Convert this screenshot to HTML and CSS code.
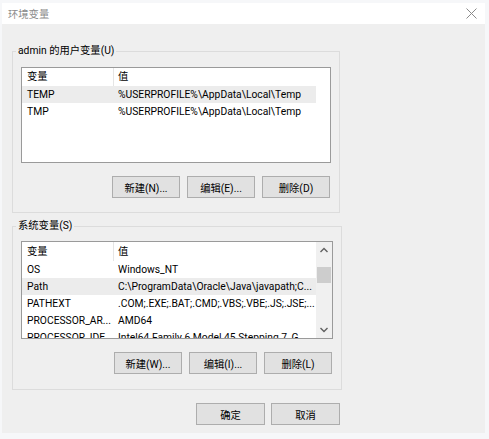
FILE: index.html
```html
<!DOCTYPE html>
<html lang="zh-CN">
<head>
    <meta charset="UTF-8">
    <title>环境变量</title>
    <link rel="stylesheet" href="styles.css">
</head>
<body>
    <div class="dialog">
        <div class="titlebar">
            <span class="title">环境变量</span>
            <svg class="close" width="11" height="11" viewBox="0 0 11 11">
                <path d="M0.5 0.5 L10.5 10.5 M10.5 0.5 L0.5 10.5" stroke="#8a8a8a" stroke-width="1" fill="none"/>
            </svg>
        </div>

        <div class="content">
            <!-- User variables -->
            <fieldset class="group">
                <legend>admin 的用户变量(U)</legend>
                <div class="list">
                    <div class="rows">
                        <div class="row header">
                            <span class="col-name">变量</span>
                            <span class="col-value">值</span>
                        </div>
                        <div class="row selected">
                            <span class="col-name">TEMP</span>
                            <span class="col-value">%USERPROFILE%\AppData\Local\Temp</span>
                        </div>
                        <div class="row">
                            <span class="col-name">TMP</span>
                            <span class="col-value">%USERPROFILE%\AppData\Local\Temp</span>
                        </div>
                    </div>
                </div>
                <div class="buttons">
                    <button>新建(N)...</button>
                    <button>编辑(E)...</button>
                    <button>删除(D)</button>
                </div>
            </fieldset>

            <!-- System variables -->
            <fieldset class="group system">
                <legend>系统变量(S)</legend>
                <div class="list">
                    <div class="rows">
                        <div class="row header">
                            <span class="col-name">变量</span>
                            <span class="col-value">值</span>
                        </div>
                        <div class="row">
                            <span class="col-name">OS</span>
                            <span class="col-value">Windows_NT</span>
                        </div>
                        <div class="row selected">
                            <span class="col-name">Path</span>
                            <span class="col-value">C:\ProgramData\Oracle\Java\javapath;C...</span>
                        </div>
                        <div class="row">
                            <span class="col-name">PATHEXT</span>
                            <span class="col-value">.COM;.EXE;.BAT;.CMD;.VBS;.VBE;.JS;.JSE;...</span>
                        </div>
                        <div class="row">
                            <span class="col-name">PROCESSOR_AR...</span>
                            <span class="col-value">AMD64</span>
                        </div>
                        <div class="row">
                            <span class="col-name">PROCESSOR_IDE...</span>
                            <span class="col-value">Intel64 Family 6 Model 45 Stepping 7, G...</span>
                        </div>
                    </div>
                    <div class="scrollbar">
                        <svg class="arrow" width="16" height="16" viewBox="0 0 16 16">
                            <path d="M4.5 10 L8 6.5 L11.5 10" stroke="#606060" stroke-width="1.4" fill="none"/>
                        </svg>
                        <div class="track">
                            <div class="thumb"></div>
                        </div>
                        <svg class="arrow" width="16" height="16" viewBox="0 0 16 16">
                            <path d="M4.5 6 L8 9.5 L11.5 6" stroke="#606060" stroke-width="1.4" fill="none"/>
                        </svg>
                    </div>
                </div>
                <div class="buttons">
                    <button>新建(W)...</button>
                    <button>编辑(I)...</button>
                    <button>删除(L)</button>
                </div>
            </fieldset>

            <div class="buttons footer">
                <button class="wide">确定</button>
                <button class="wide">取消</button>
            </div>
        </div>
    </div>
</body>
</html>
```

FILE: styles.css
```css
/* Dialog */
body {
    margin: 0;
    padding: 0;
    background-color: #f6f7f9;
    font-family: Roboto, "Noto Sans CJK SC", sans-serif;
    font-size: 10.3px;
    color: #000;
}

.dialog {
    margin: 3px 0 0 2px;
    width: 483px;
    height: 430px;
    background-color: #efefef;
}

.titlebar {
    height: 21px;
    background-color: #fff;
    display: flex;
    align-items: center;
    justify-content: space-between;
    padding: 0 4px 0 6px;
}

.title {
    color: #8c8c8c;
    font-size: 10.3px;
}

.close {
    margin-right: 4px;
}

.content {
    padding: 19px 0 0 10px;
}

.group {
    box-sizing: border-box;
    width: 328px;
    margin: 0;
    padding: 8px 8px 14px 8px;
    border: 1px solid #dcdcdc;
}

.group legend {
    padding: 0 2px;
    margin-left: -5px;
    line-height: 16px;
}

.group.system {
    margin-top: 5px;
    padding-top: 7px;
    padding-bottom: 15px;
}

/* List view */
.list {
    box-sizing: border-box;
    height: 96px;
    border: 1px solid #9a9a9a;
    background-color: #fff;
    display: flex;
    overflow: hidden;
}

.system .list {
    height: 98px;
}

.rows {
    width: 294px;
}

.row {
    display: flex;
    height: 17px;
    line-height: 17px;
    white-space: nowrap;
}

.row.header {
    height: 18px;
    line-height: 18px;
}

.system .row.header {
    height: 19px;
    line-height: 19px;
}

.row.selected {
    background-color: #ececec;
}

.col-name {
    box-sizing: border-box;
    width: 92px;
    padding-left: 5px;
    overflow: hidden;
}

.col-value {
    flex: 1;
    padding-left: 4px;
    overflow: hidden;
}

.header .col-name {
    border-right: 1px solid #e5e5e5;
}

/* Scroll bar */
.scrollbar {
    margin-left: auto;
    width: 16px;
    background-color: #f0f0f0;
    display: flex;
    flex-direction: column;
}

.track {
    flex: 1;
}

.thumb {
    margin: 9px 1px 0 1px;
    height: 16px;
    background-color: #cdcdcd;
}

/* Buttons */
.buttons {
    display: flex;
    justify-content: flex-end;
    gap: 7px;
    margin-top: 13px;
    padding-right: 1px;
}

button {
    box-sizing: border-box;
    width: 68px;
    height: 22px;
    padding: 0;
    font-family: inherit;
    font-size: 10.3px;
    color: #000;
    background-color: #e1e1e1;
    border: 1px solid #adadad;
    border-radius: 0;
}

.footer {
    width: 328px;
    justify-content: flex-end;
    gap: 6px;
    margin-top: 13px;
    padding-right: 0;
}

button.wide {
    width: 69px;
}
```
